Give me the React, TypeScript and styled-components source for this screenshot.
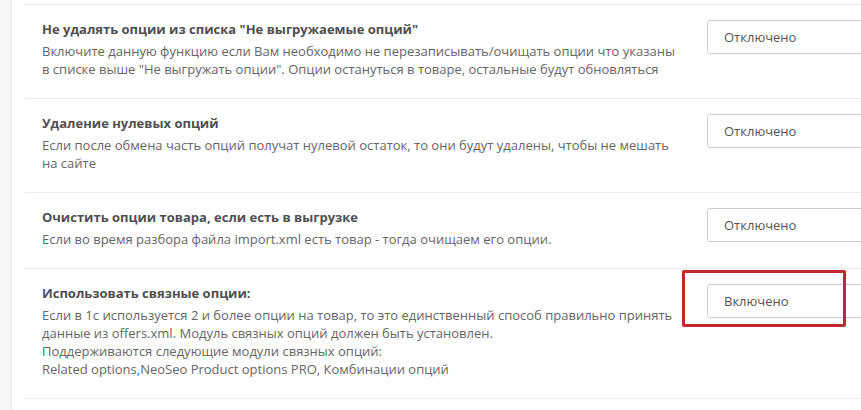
import React from "react";
import styled, { createGlobalStyle } from "styled-components";

const Global = createGlobalStyle`
  html, body { margin: 0; padding: 0; background: #ffffff; }
  body { font-family: "Open Sans", "Noto Sans", sans-serif; overflow: hidden; }
`;

const Page = styled.div`
  display: flex;
  width: 861px;
  height: 410px;
  overflow: hidden;
  background: #ffffff;
`;

const Rail = styled.div`
  flex: 0 0 11px;
  background: #f6f6f6;
  border-right: 1px solid #e6e6e6;
`;

const Content = styled.div`
  flex: 1;
  padding: 4px 0 0 13px;
  min-width: 0;
`;

const Row = styled.div`
  display: grid;
  grid-template-columns: 665px 1fr;
  align-items: start;
  border-top: 1px solid #ececec;
  padding: 15px 0 20px 17px;
  &:last-child { border-bottom: 1px solid #ececec; }
`;

const Info = styled.div`
  display: flex;
  flex-direction: column;
  gap: 4px;
`;

const Title = styled.div`
  font-size: 13px;
  line-height: 18px;
  font-weight: 700;
  color: #4f4f4f;
`;

const Help = styled.div`
  font-size: 13px;
  line-height: 18px;
  color: #666666;
`;

const Control = styled.div`
  position: relative;
`;

const Select = styled.div`
  box-sizing: border-box;
  width: 200px;
  height: 34px;
  border: 1px solid #cfcfcf;
  border-radius: 3px;
  padding-left: 16px;
  display: flex;
  align-items: center;
  font-size: 13px;
  color: #555555;
  background: #ffffff;
`;

const Highlight = styled.div`
  position: absolute;
  left: -25px;
  top: -14px;
  width: 164px;
  height: 57px;
  box-sizing: border-box;
  border: 3px solid #c1272d;
  border-radius: 2px;
  pointer-events: none;
`;

type Item = { title: string; help: string[]; value: string; marked?: boolean };

const items: Item[] = [
  {
    title: 'Не удалять опции из списка "Не выгружаемые опций"',
    help: [
      "Включите данную функцию если Вам необходимо не перезаписывать/очищать опции что указаны",
      'в списке выше "Не выгружать опции". Опции остануться в товаре, остальные будут обновляться',
    ],
    value: "Отключено",
  },
  {
    title: "Удаление нулевых опций",
    help: [
      "Если после обмена часть опций получат нулевой остаток, то они будут удалены, чтобы не мешать",
      "на сайте",
    ],
    value: "Отключено",
  },
  {
    title: "Очистить опции товара, если есть в выгрузке",
    help: ["Если во время разбора файла import.xml есть товар - тогда очищаем его опции."],
    value: "Отключено",
  },
  {
    title: "Использовать связные опции:",
    help: [
      "Если в 1с используется 2 и более опции на товар, то это единственный способ правильно принять",
      "данные из offers.xml. Модуль связных опций должен быть установлен.",
      "Поддерживаются следующие модули связных опций:",
      "Related options,NeoSeo Product options PRO, Комбинации опций",
    ],
    value: "Включено",
    marked: true,
  },
];

export default function App() {
  return (
    <>
      <Global />
      <Page>
        <Rail />
        <Content>
          {items.map((it) => (
            <Row key={it.title}>
              <Info>
                <Title>{it.title}</Title>
                <Help>
                  {it.help.map((l, i) => (
                    <React.Fragment key={i}>
                      {i > 0 && <br />}
                      {l}
                    </React.Fragment>
                  ))}
                </Help>
              </Info>
              <Control>
                <Select>{it.value}</Select>
                {it.marked && <Highlight />}
              </Control>
            </Row>
          ))}
        </Content>
      </Page>
    </>
  );
}
